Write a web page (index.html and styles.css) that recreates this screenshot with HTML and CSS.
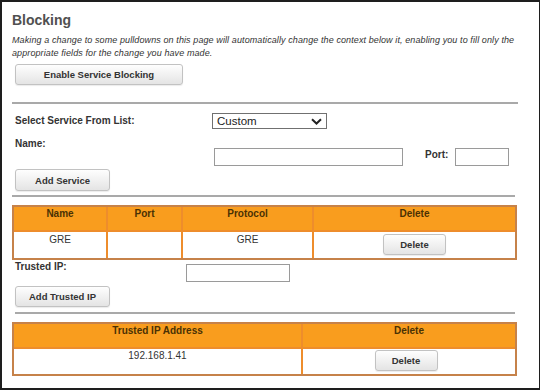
FILE: index.html
```html
<!DOCTYPE html>
<html>
<head>
<meta charset="utf-8">
<link rel="stylesheet" href="styles.css">
</head>
<body>
<div class="frame">
  <h1 class="title">Blocking</h1>
  <p class="desc">Making a change to some pulldowns on this page will automatically change the context below it, enabling you to fill only the appropriate fields for the change you have made.</p>
  <button class="btn btn-enable">Enable Service Blocking</button>
  <div class="rule rule-1"></div>

  <div class="row row-select">
    <span class="label label-select">Select Service From List:</span>
    <div class="select">
      <span>Custom</span>
      <svg class="chev" width="11" height="7" viewBox="0 0 11 7"><path d="M1 1.2 L5.5 5.5 L10 1.2" fill="none" stroke="#222" stroke-width="2"/></svg>
    </div>
  </div>

  <div class="row row-name">
    <span class="label label-name">Name:</span>
    <input class="input input-name" type="text">
    <span class="label label-port">Port:</span>
    <input class="input input-port" type="text">
  </div>

  <button class="btn btn-small btn-add">Add Service</button>
  <div class="rule rule-2"></div>

  <table class="grid grid-services">
    <tr>
      <th class="s1">Name</th>
      <th class="s2">Port</th>
      <th class="s3">Protocol</th>
      <th>Delete</th>
    </tr>
    <tr>
      <td>GRE</td>
      <td></td>
      <td>GRE</td>
      <td class="act"><button class="btn btn-del">Delete</button></td>
    </tr>
  </table>

  <div class="row row-trusted">
    <span class="label label-trusted">Trusted IP:</span>
    <input class="input input-trusted" type="text">
  </div>
  <button class="btn btn-small btn-trusted">Add Trusted IP</button>
  <div class="rule rule-3"></div>

  <table class="grid grid-ips">
    <tr>
      <th class="t1">Trusted IP Address</th>
      <th>Delete</th>
    </tr>
    <tr>
      <td>192.168.1.41</td>
      <td class="act"><button class="btn btn-del btn-del2">Delete</button></td>
    </tr>
  </table>
</div>
</body>
</html>
```

FILE: styles.css
```css
html, body {
  margin: 0;
  padding: 0;
  background: #ffffff;
}

.frame {
  box-sizing: border-box;
  width: 540px;
  height: 390px;
  border: 2px solid #1e1e1e;
  border-right-width: 1px;
  padding: 10px 0 0 10px;
  font-family: "Liberation Sans", Arial, sans-serif;
  color: #333333;
  overflow: hidden;
}

.title {
  margin: 0;
  font-size: 14px;
  line-height: 16px;
  font-weight: bold;
  color: #505050;
}

.desc {
  margin: 6px 0 0 0;
  width: 516px;
  font-size: 9px;
  line-height: 13px;
  font-style: italic;
  letter-spacing: 0.1px;
  color: #333333;
}

.btn {
  display: block;
  box-sizing: border-box;
  font-family: "Liberation Sans", Arial, sans-serif;
  font-weight: bold;
  font-size: 9.5px;
  color: #333333;
  background: linear-gradient(#fefefe, #e4e4e4);
  border: 1px solid #c2c2c2;
  border-radius: 3px;
  box-shadow: 0 1px 1px rgba(0, 0, 0, 0.08);
  padding: 0;
  text-align: center;
}

.btn-enable {
  margin: 4px 0 0 3px;
  width: 168px;
  height: 21px;
}

.btn-small {
  margin-left: 3px;
  width: 95px;
  height: 22px;
}

.btn-add { margin-top: 3px; }
.btn-trusted { margin-top: 4px; height: 21px; }

.rule {
  width: 506px;
  border-top: 2px solid #a9a9a9;
}
.rule-1 { margin-top: 17px; }
.rule-2 { margin-top: 4px; width: 503px; }
.rule-3 { margin-top: 5px; width: 500px; margin-left: 3px; }

.row {
  display: flex;
  margin-left: 3px;
}

.label {
  font-size: 10px;
  line-height: 12px;
  font-weight: bold;
  color: #333333;
}

.row-select {
  margin-top: 9px;
  align-items: center;
}
.label-select { width: 197px; }

.select {
  box-sizing: border-box;
  width: 115px;
  height: 16px;
  border: 1px solid #707070;
  display: flex;
  align-items: center;
  justify-content: space-between;
  padding: 0 4px 0 4px;
  font-size: 11.5px;
  color: #222222;
  background: #ffffff;
}
.chev { display: block; }

.row-name {
  margin-top: 9px;
  align-items: flex-start;
}
.label-name { width: 199px; }

.input {
  box-sizing: border-box;
  height: 18px;
  border: 1px solid #9a9a9a;
  background: #ffffff;
  padding: 0;
  margin: 0;
}
.input-name { width: 189px; margin-top: 10px; }
.label-port { margin: 11px 0 0 22px; width: 30px; }
.input-port { width: 54px; margin-top: 10px; }

.grid {
  box-sizing: border-box;
  width: 505px;
  border-collapse: separate;
  border-spacing: 0;
  border: 2px solid #c6824a;
  table-layout: fixed;
  margin-top: 8px;
}

.grid th, .grid td {
  box-sizing: border-box;
  padding: 0;
  vertical-align: top;
  text-align: center;
  font-size: 10px;
  line-height: 12px;
}

.grid th + th, .grid td + td {
  border-left: 2px solid #ee8d2c;
}

.grid th {
  background: #f99d1e;
  color: #4a3104;
  font-weight: bold;
  height: 25px;
  padding-top: 1px;
  border-bottom: 2px solid #ee8d2c;
}

.grid td {
  color: #333333;
  height: 26px;
  padding-top: 2px;
}

.s1 { width: 92px; }
.s2 { width: 75px; }
.s3 { width: 131px; }
.t1 { width: 287px; }

.btn-del {
  width: 63px;
  height: 21px;
  margin: 0 auto;
}
.grid td.act { padding-top: 2px; }
.grid-ips td { height: 25px; padding-top: 1px; }
.grid-ips td.act { padding-top: 1px; }
.btn-del2 { position: relative; left: -3px; }

.row-trusted {
  margin-top: 1px;
  align-items: flex-start;
}
.label-trusted { width: 171px; }
.input-trusted { width: 104px; margin-top: 3px; }
```
